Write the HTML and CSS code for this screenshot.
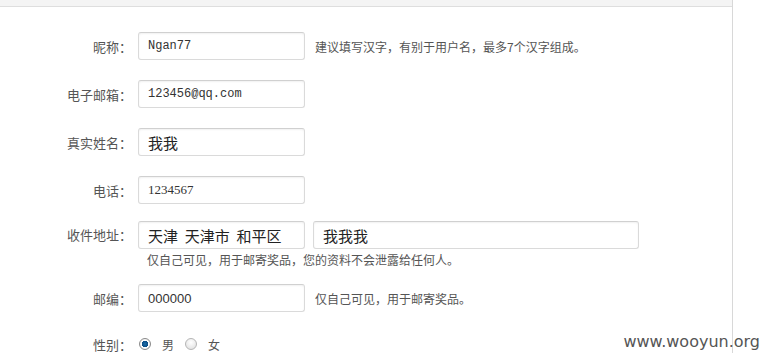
FILE: index.html
```html
<!DOCTYPE html>
<html lang="zh-CN">
  <head>
    <meta charset="UTF-8" />
    <title>个人资料</title>
    <link rel="stylesheet" href="styles.css">
  </head>
  <body>
    <section class="panel">
      <div class="topbar"></div>
      <form class="profile">
        <div class="row">
          <label>昵称：</label>
          <input class="txt mono" type="text" value="Ngan77" />
          <span class="tip">建议填写汉字，有别于用户名，最多7个汉字组成。</span>
        </div>
        <div class="row">
          <label>电子邮箱：</label>
          <input class="txt mono" type="text" value="123456@qq.com" />
        </div>
        <div class="row">
          <label>真实姓名：</label>
          <input class="txt big" type="text" value="我我" />
        </div>
        <div class="row">
          <label>电话：</label>
          <input class="txt serif" type="text" value="1234567" />
        </div>
        <div class="row addr">
          <label>收件地址：</label>
          <div class="addr-box">
            <div class="addr-inputs">
              <input class="txt big" type="text" value="天津  天津市  和平区" />
              <input class="txt big wide" type="text" value="我我我" />
            </div>
            <span class="tip under">仅自己可见，用于邮寄奖品，您的资料不会泄露给任何人。</span>
          </div>
        </div>
        <div class="row">
          <label>邮编：</label>
          <input class="txt sans" type="text" value="000000" />
          <span class="tip">仅自己可见，用于邮寄奖品。</span>
        </div>
        <div class="row sex">
          <label>性别：</label>
          <span class="radio on"></span><span class="opt">男</span>
          <span class="radio"></span><span class="opt">女</span>
        </div>
      </form>
    </section>
    <div class="mark">www.wooyun.org</div>
  </body>
</html>
```

FILE: styles.css
```css
body {
  margin: 0;
  padding: 0;
  background-color: #fff;
  font-family: "Noto Sans CJK SC", sans-serif;
  color: #555;
  height: 353px;
  overflow: hidden;
}

.panel {
  width: 732px;
  height: 353px;
  border-right: 1px solid #d8d8d8;
}

.topbar {
  height: 6px;
  background-color: #f4f4f4;
  border-bottom: 1px solid #dedede;
}

.profile {
  padding-top: 25px;
}

.row {
  display: flex;
  align-items: center;
  height: 28px;
  margin-bottom: 20px;
}

.row label {
  width: 132px;
  text-align: right;
  font-size: 13px;
  color: #555;
  margin-right: 6px;
}

.txt {
  box-sizing: border-box;
  width: 167px;
  height: 28px;
  border: 1px solid #dadada;
  border-top-color: #d0d0d0;
  border-radius: 3px;
  box-shadow: inset 0 1px 2px rgba(0, 0, 0, 0.06);
  padding: 0 9px;
  color: #333;
  margin: 0;
  outline: none;
}

.mono {
  font-family: "Liberation Mono", monospace;
  font-size: 12px;
}

.serif {
  font-family: "Liberation Serif", serif;
  font-size: 13px;
}

.sans {
  font-family: "Liberation Sans", sans-serif;
  font-size: 13px;
}

.big {
  font-family: "Noto Sans CJK SC", sans-serif;
  font-size: 15px;
  color: #222;
  white-space: pre;
}

.tip {
  font-size: 12px;
  color: #555;
  margin-left: 10px;
}

.addr {
  height: auto;
  align-items: flex-start;
  margin-top: -3px;
  margin-bottom: 17px;
}

.addr label {
  line-height: 28px;
}

.addr-box {
  display: flex;
  flex-direction: column;
}

.addr-inputs {
  display: flex;
  gap: 8px;
}

.wide {
  width: 326px;
}

.tip.under {
  margin: 4px 0 0 9px;
  line-height: 14px;
}

.sex {
  margin-top: 25px;
  height: 14px;
}

.radio {
  box-sizing: border-box;
  width: 12px;
  height: 12px;
  border-radius: 50%;
  border: 1px solid #b5b5b5;
  background: radial-gradient(circle at 50% 35%, #fff, #dcdcdc);
  margin-left: 1px;
}

.radio.on {
  background: radial-gradient(circle, #1f6fa8 0, #0b4d86 3px, #fff 3.5px, #e2e2e2 100%);
  border-color: #8a8a8a;
}

.opt {
  font-size: 12px;
  color: #555;
  margin: 0 10px 0 11px;
}

.mark {
  position: absolute;
  right: 3px;
  bottom: 2px;
  font-family: "DejaVu Sans", sans-serif;
  font-size: 16px;
  color: #555;
}
```
